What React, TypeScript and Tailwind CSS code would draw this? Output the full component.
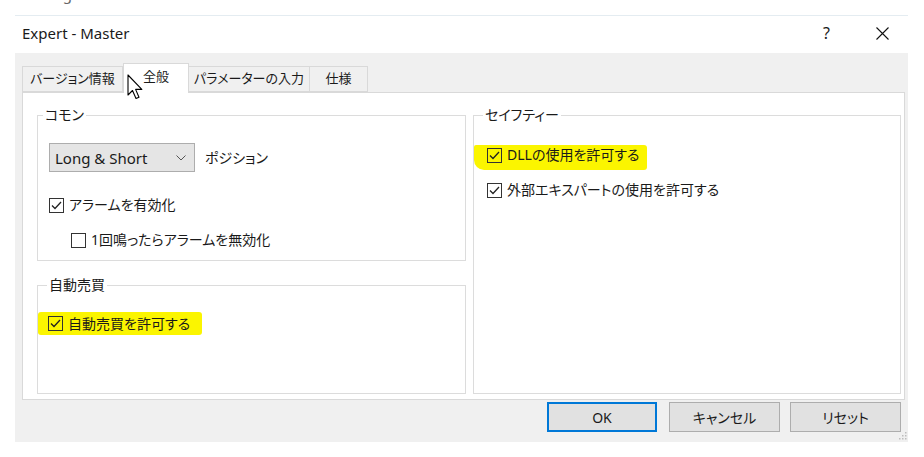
import type { ReactNode } from 'react'

function CheckBox({ checked, onYellow }: { checked: boolean; onYellow?: boolean }) {
  return (
    <span
      className={
        onYellow
          ? 'w-[15px] h-[15px] border border-[#333] bg-transparent flex items-center justify-center shrink-0'
          : 'w-[15px] h-[15px] border border-[#333] bg-white flex items-center justify-center shrink-0'
      }
    >
      {checked && (
        <svg width="11" height="9" viewBox="0 0 11 9">
          <path d="M1 4.5 L4 7.5 L10 1" fill="none" stroke="#222" strokeWidth="1.3" />
        </svg>
      )}
    </span>
  )
}

function Row({ checked, label, onYellow }: { checked: boolean; label: string; onYellow?: boolean }) {
  return (
    <div className="h-[16px] flex items-center gap-[5px]">
      <CheckBox checked={checked} onYellow={onYellow} />
      <span className="text-[14px] leading-[16px] whitespace-nowrap">{label}</span>
    </div>
  )
}

function Group({ label, legendClass, className, children }: { label: string; legendClass: string; className: string; children: ReactNode }) {
  return (
    <fieldset className={className}>
      <legend className={legendClass}>{label}</legend>
      {children}
    </fieldset>
  )
}

const tabs = [
  { label: 'バージョン情報', w: 'w-[101px]', active: false },
  { label: '全般', w: 'w-[66px]', active: true },
  { label: 'パラメーターの入力', w: 'w-[122px]', active: false },
  { label: '仕様', w: 'w-[59px]', active: false },
]

export default function App() {
  return (
    <div className="w-[924px] h-[457px] bg-white overflow-hidden relative text-[#1a1a1a] font-['Noto_Sans','Noto_Sans_CJK_JP',sans-serif] [font-feature-settings:'palt']">
      {/* line of the page above, mostly cut off */}
      <div className="h-[15px] overflow-hidden pl-[22px]">
        <p className="-mt-[15px] text-[15px] leading-[18px] text-[#666]">Setting</p>
      </div>

      <div className="ml-[15px] w-[893px] border-t border-[#e4ecf1]">
        {/* Title bar */}
        <div className="h-[37px] flex items-center justify-between pl-[7px] pb-[3px]">
          <span className="text-[15px] leading-[18px]">Expert - Master</span>
          <div className="flex items-center gap-[46px] pr-[19px]">
            <span className="text-[16px] leading-[18px]">?</span>
            <svg width="13" height="13" viewBox="0 0 13 13">
              <path d="M0.5 0.5 L12.5 12.5 M12.5 0.5 L0.5 12.5" stroke="#111" strokeWidth="1.1" />
            </svg>
          </div>
        </div>

        {/* Body */}
        <div className="h-[389px] bg-[#f0f0f0] pl-[7px] pr-[3px] pt-[10px] flex flex-col relative">
          <div className="h-[29px] flex items-end">
            {tabs.map((t) =>
              t.active ? (
                <div
                  key={t.label}
                  className={`${t.w} h-[30px] -mb-px relative z-10 bg-white border border-b-0 border-[#d9d9d9] flex items-center justify-center text-[13px] pb-[4px]`}
                >
                  {t.label}
                </div>
              ) : (
                <div
                  key={t.label}
                  className={`${t.w} h-[26px] bg-[#f0f0f0] border border-[#d9d9d9] -ml-px first:ml-0 flex items-center justify-center text-[13px]`}
                >
                  {t.label}
                </div>
              )
            )}
          </div>

          <div className="h-[308px] bg-white border border-[#d9d9d9] pt-[14px] pl-[14px] flex gap-[7px]">
            <div className="w-[429px] flex flex-col gap-[16px]">
              <Group
                label="コモン"
                legendClass="ml-[5px] px-[2px] text-[14px] leading-[16px]"
                className="h-[154px] border border-[#dcdcdc]"
              >
                <div className="pl-[11px]">
                  <div className="mt-[20px] flex items-center">
                    <div className="w-[146px] h-[29px] border border-[#adadad] bg-[#e5e5e5] flex items-center justify-between pl-[5px] pr-[8px]">
                      <span className="text-[15px] leading-[18px]">Long &amp; Short</span>
                      <svg width="10" height="6" viewBox="0 0 10 6">
                        <path d="M0.5 0.5 L5 5 L9.5 0.5" fill="none" stroke="#555" strokeWidth="1" />
                      </svg>
                    </div>
                    <span className="ml-[10px] text-[14px] leading-[16px]">ポジション</span>
                  </div>
                  <div className="mt-[25px]">
                    <Row checked label="アラームを有効化" />
                  </div>
                  <div className="mt-[19px] pl-[22px]">
                    <Row checked={false} label="1回鳴ったらアラームを無効化" />
                  </div>
                </div>
              </Group>

              <Group
                label="自動売買"
                legendClass="ml-[9px] px-[2px] text-[14px] leading-[16px]"
                className="h-[117px] border border-[#dcdcdc]"
              >
                <div className="mt-[19px] w-[164px] h-[23px] pl-[10px] flex items-center bg-[#fbf500] rounded-[3px]">
                  <Row checked onYellow label="自動売買を許可する" />
                </div>
              </Group>
            </div>

            <Group
              label="セイフティー"
              legendClass="ml-[9px] px-[2px] text-[14px] leading-[16px]"
              className="w-[428px] h-[287px] border border-[#dcdcdc]"
            >
              <div className="mt-[22px] w-[173px] h-[25px] pl-[13px] pt-[2px] flex items-start bg-[#fbf500] rounded-tl-[2px] rounded-bl-[10px] rounded-r-[3px]">
                <Row checked onYellow label="DLLの使用を許可する" />
              </div>
              <div className="mt-[12px] pl-[13px]">
                <Row checked label="外部エキスパートの使用を許可する" />
              </div>
            </Group>
          </div>

          {/* Buttons */}
          <div className="mt-[2px] flex justify-end pr-[4px]">
            <button className="w-[110px] h-[30px] border-2 border-[#0078d7] bg-[#e1e1e1] text-[14px]">OK</button>
            <button className="ml-[12px] w-[111px] h-[30px] border border-[#adadad] bg-[#e1e1e1] text-[14px]">キャンセル</button>
            <button className="ml-[10px] w-[111px] h-[30px] border border-[#adadad] bg-[#e1e1e1] text-[14px]">リセット</button>
          </div>

          {/* size grip */}
          <svg className="absolute right-[1px] bottom-[2px]" width="8" height="8" viewBox="0 0 8 8">
            <rect x="6" y="0" width="1.5" height="1.5" fill="#bdbdbd" />
            <rect x="3" y="3" width="1.5" height="1.5" fill="#bdbdbd" />
            <rect x="6" y="3" width="1.5" height="1.5" fill="#bdbdbd" />
            <rect x="0" y="6" width="1.5" height="1.5" fill="#bdbdbd" />
            <rect x="3" y="6" width="1.5" height="1.5" fill="#bdbdbd" />
            <rect x="6" y="6" width="1.5" height="1.5" fill="#bdbdbd" />
          </svg>
        </div>
      </div>

      {/* mouse pointer over the tabs */}
      <svg className="absolute left-[127px] top-[74px] z-20" width="18" height="27" viewBox="0 0 18 27">
        <path
          d="M1 1 L1 21 L5.5 16.5 L9 24.5 L12 23.2 L8.6 15.4 L14.8 15.4 Z"
          fill="#fff"
          stroke="#000"
          strokeWidth="1.1"
          strokeLinejoin="round"
        />
      </svg>
    </div>
  )
}
